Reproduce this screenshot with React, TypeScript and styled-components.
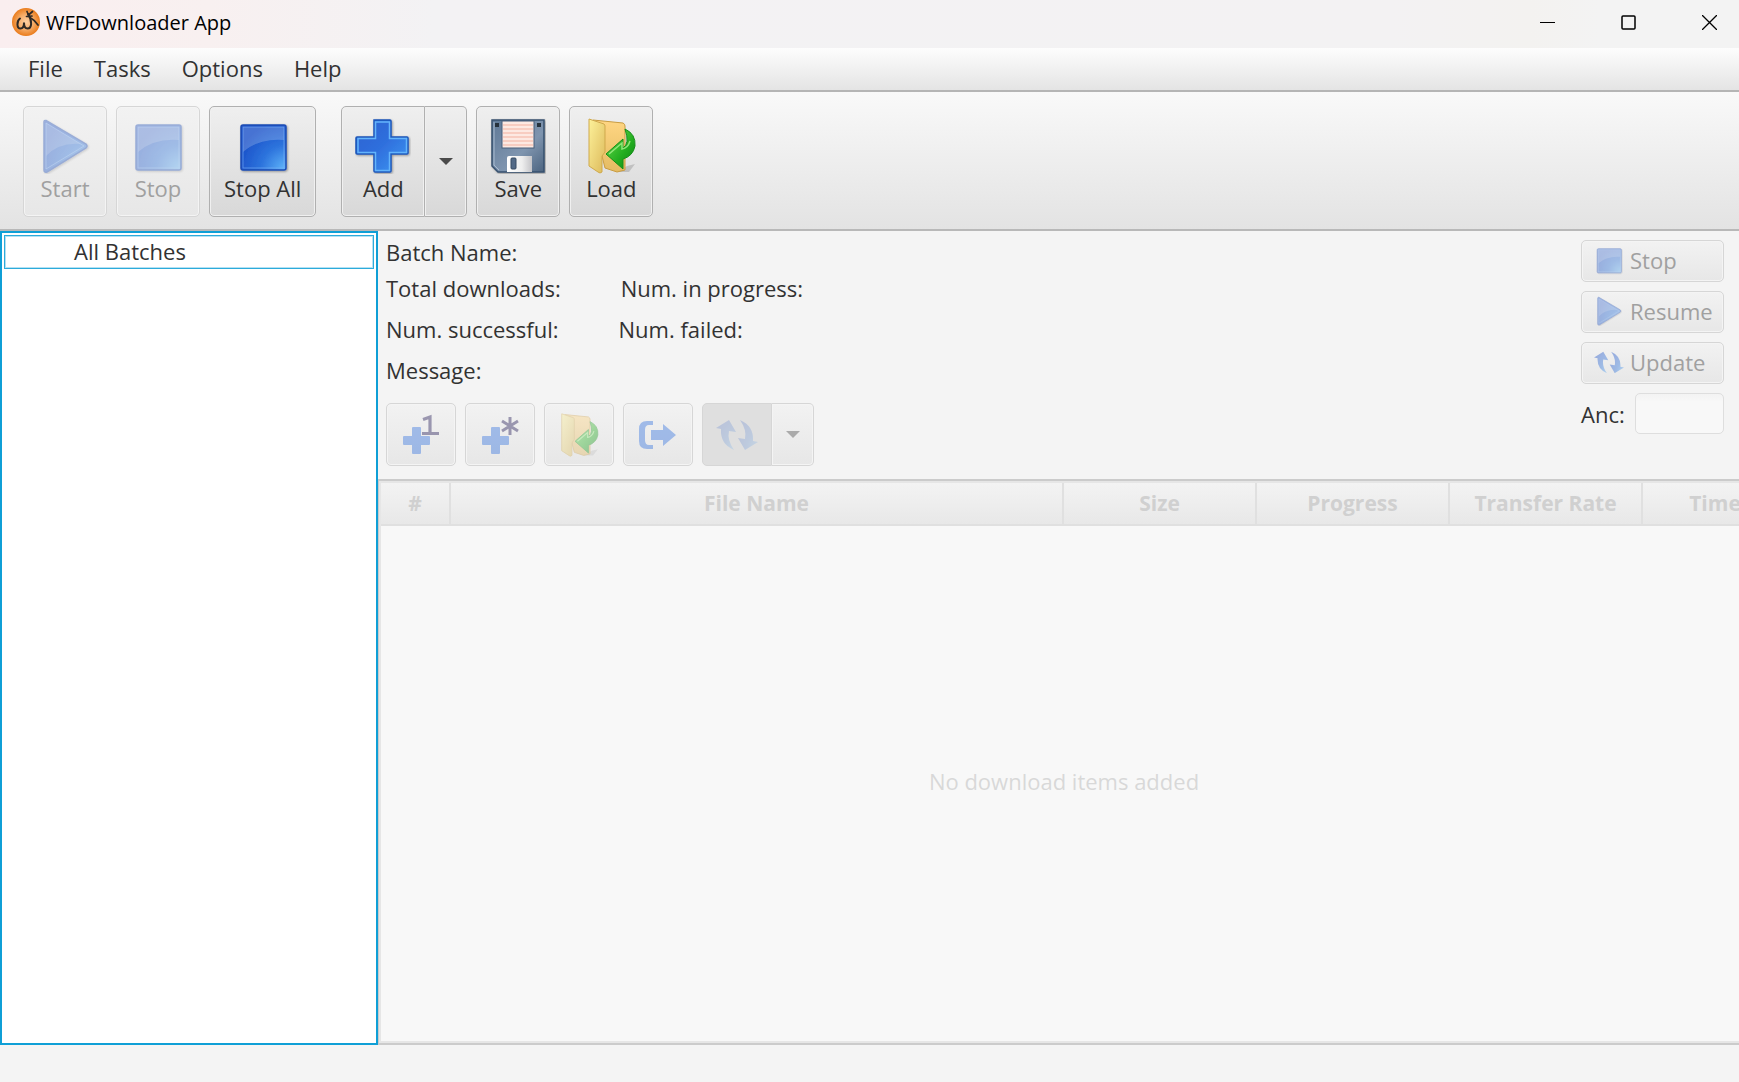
import React from "react";
import styled, { createGlobalStyle, css } from "styled-components";

const Global = createGlobalStyle`
  * { box-sizing: border-box; }
  html, body, #root { height: 100%; margin: 0; }
  body { font-family: "Open Sans", "Noto Sans", sans-serif; font-size: 22px; line-height: 30px; color: #323232; background: #f4f4f4; overflow: hidden; }
  button, input { font: inherit; color: inherit; }
`;

const Window = styled.div`
  display: flex;
  flex-direction: column;
  height: 100vh;
  background: #f4f4f4;
`;

const TitleBar = styled.header`
  display: flex;
  align-items: center;
  height: 48px;
  padding: 0 0 4px 12px;
  background: linear-gradient(90deg, #faeeef 0%, #f8f0f0 12%, #f3f2f4 25%, #f3f2f3 80%, #f3f2f0 88%, #f3f3f3 92%);
`;

const Title = styled.h1`
  margin: 0 auto 0 6px;
  font-size: 20px;
  font-weight: 400;
  line-height: 30px;
  padding-top: 2px;
  color: #000;
`;

const CaptionButtons = styled.div`
  display: flex;
  gap: 21px;
`;

const CaptionButton = styled.button`
  display: grid;
  place-items: center;
  width: 60px;
  height: 44px;
  padding: 0;
  border: 0;
  background: none;
`;

const MenuBar = styled.nav`
  display: flex;
  align-items: center;
  gap: 31px;
  height: 44px;
  padding: 0 28px 2px;
  border-bottom: 2px solid #b5b5b5;
  background: linear-gradient(#fdfdfd, #e4e4e4);
`;

const MenuItem = styled.button`
  padding: 0;
  border: 0;
  background: none;
`;

const ToolBar = styled.div`
  display: flex;
  gap: 9px;
  padding: 14px 23px 12px;
  border-bottom: 2px solid #b8b8b8;
  background: linear-gradient(#f9f9f9, #e3e3e3);
`;

const bevel = css<{ disabled?: boolean }>`
  border: 1px solid ${(p) => (p.disabled ? "#d6d6d6" : "#b0b0b0")};
  border-radius: 5px;
  background: ${(p) => (p.disabled ? "linear-gradient(#f2f2f2, #e7e7e7)" : "linear-gradient(#efefef, #d8d8d8)")};
  box-shadow: inset 0 0 0 1px ${(p) => (p.disabled ? "#f4f4f4" : "#f0f0f0")};
  color: ${(p) => (p.disabled ? "#a0a0a0" : "#323232")};
  svg { opacity: ${(p) => (p.disabled ? 0.4 : 1)}; }
`;

const ToolButton = styled.button<{ $spaced?: boolean }>`
  ${bevel}
  display: flex;
  flex-direction: column;
  align-items: center;
  min-width: 84px;
  height: 111px;
  margin-right: ${(p) => (p.$spaced ? "16px" : "0")};
  padding: 11px ${(p) => (p.$spaced ? "14px" : "12px")};
  line-height: 28px;
`;

const Split = styled.div`
  display: flex;
  & > button:first-child { border-radius: 5px 0 0 5px; }
  & > button:last-child { border-left: 0; border-radius: 0 5px 5px 0; }
`;

const ArrowButton = styled.button<{ $height: number }>`
  ${bevel}
  display: grid;
  place-items: center;
  width: 42px;
  height: ${(p) => p.$height}px;
  padding: 0;
`;

const Body = styled.div`
  display: flex;
  flex: 1;
  min-height: 0;
  margin-bottom: 37px;
`;

const BatchList = styled.ul`
  flex: none;
  width: 378px;
  margin: 0;
  padding: 2px;
  list-style: none;
  border: 2px solid #0f9fd6;
  background: #fff;
`;

const BatchItem = styled.li`
  padding: 0 0 2px 69px;
  border: 1px solid #2cabdb;
  box-shadow: inset 0 0 0 1px #b5e1f2;
`;

const Main = styled.main`
  display: flex;
  flex: 1;
  flex-direction: column;
  min-width: 0;
  overflow: hidden;
`;

const Details = styled.section`
  display: flex;
  justify-content: space-between;
  padding: 5px 15px 13px 8px;
`;

const Info = styled.dl`
  display: flex;
  flex-direction: column;
  margin: 0 0 13px;
`;

const InfoRow = styled.div<{ $height: number }>`
  display: flex;
  align-items: center;
  gap: 60px;
  height: ${(p) => p.$height}px;
`;

const Label = styled.dt``;

const Actions = styled.div`
  display: flex;
  gap: 9px;
`;

const ActionButton = styled.button<{ $pressed?: boolean }>`
  ${bevel}
  display: grid;
  place-items: center;
  width: 70px;
  height: 63px;
  padding: 0;
  ${(p) => p.$pressed && css`
    background: #dfdfdf;
    box-shadow: none;
    svg { opacity: 0.18; }
  `}
`;

const SidePanel = styled.div`
  display: flex;
  flex: none;
  flex-direction: column;
  gap: 9px;
  width: 143px;
  padding-top: 4px;
`;

const SideButton = styled.button`
  ${bevel}
  display: flex;
  align-items: center;
  gap: 6px;
  height: 42px;
  padding: 0 4px 2px 12px;
  svg { flex: none; }
`;

const Field = styled.label`
  display: flex;
  align-items: center;
  justify-content: space-between;
`;

const FieldInput = styled.input`
  width: 89px;
  height: 41px;
  border: 1px solid #dedede;
  border-radius: 5px;
  background: linear-gradient(#f3f3f3, #f8f8f8 8px);
`;

const TableBox = styled.div`
  display: flex;
  flex: 1;
  flex-direction: column;
  overflow: hidden;
  margin-right: -8px;
  border: solid #cbcbcb;
  border-width: 2px 0 2px 1px;
  box-shadow: inset 0 0 0 2px #e6e6e6;
  padding: 2px 0 2px 2px;
  background: #f8f8f8;
`;

const Table = styled.table`
  flex: none;
  width: 1454px;
  table-layout: fixed;
  border-collapse: collapse;
`;

const Th = styled.th<{ $width: number }>`
  width: ${(p) => p.$width}px;
  height: 42px;
  padding: 0 0 2px;
  border-right: 2px solid #e0e0e0;
  border-bottom: 2px solid #e0e0e0;
  background: linear-gradient(#f3f3f3, #e8e8e8);
  font-size: 21px;
  font-weight: 700;
  color: #d0d0d0;
`;

const Empty = styled.p`
  display: grid;
  flex: 1;
  place-items: center;
  margin: 0;
  padding-bottom: 5px;
  color: #d8d8d8;
`;

const HiddenDefs = styled.svg`
  position: absolute;
`;

const Gradients = () => (
  <HiddenDefs width="0" height="0" aria-hidden="true">
    <defs>
      <radialGradient id="blue" cx="1" cy="1" r="1.1">
        <stop offset="0" stopColor="#62b8fb" />
        <stop offset=".5" stopColor="#2d74dd" />
        <stop offset="1" stopColor="#1a50c8" />
      </radialGradient>
      <linearGradient id="plus" x1="0" y1="0" x2="1" y2="1">
        <stop offset="0" stopColor="#2f62d0" />
        <stop offset=".5" stopColor="#2f6fdd" />
        <stop offset="1" stopColor="#3f9af4" />
      </linearGradient>
      <radialGradient id="orange">
        <stop offset="0" stopColor="#fbd0a4" />
        <stop offset=".55" stopColor="#f5ab66" />
        <stop offset="1" stopColor="#ea7c1c" />
      </radialGradient>
      <linearGradient id="disk" x1="0" y1="0" x2="1" y2="1">
        <stop offset="0" stopColor="#5e7896" />
        <stop offset=".6" stopColor="#7f95af" />
        <stop offset="1" stopColor="#4c6480" />
      </linearGradient>
      <linearGradient id="shutter" x1="0" y1="0" x2="1" y2="0">
        <stop offset="0" stopColor="#fff" />
        <stop offset=".6" stopColor="#eee" />
        <stop offset="1" stopColor="#c4c4c8" />
      </linearGradient>
      <linearGradient id="folder" x1="0" y1="0" x2="1" y2="1">
        <stop offset="0" stopColor="#fdf19a" />
        <stop offset="1" stopColor="#dcb95a" />
      </linearGradient>
      <linearGradient id="folderBack" x1="0" y1="0" x2="0" y2="1">
        <stop offset="0" stopColor="#ffd683" />
        <stop offset="1" stopColor="#e4bb62" />
      </linearGradient>
      <linearGradient id="green" x1="0" y1="0" x2="1" y2="1">
        <stop offset="0" stopColor="#6be04e" />
        <stop offset=".6" stopColor="#23ad20" />
        <stop offset="1" stopColor="#0a8310" />
      </linearGradient>
      <filter id="soft" x="-20%" y="-20%" width="150%" height="150%">
        <feDropShadow dx="1" dy="1" stdDeviation="1" floodColor="#000" floodOpacity=".35" />
      </filter>
    </defs>
  </HiddenDefs>
);

const AppLogo = () => (
  <svg width="28" height="28" viewBox="0 0 28 28" aria-hidden="true">
    <circle cx="14" cy="14" r="14" fill="url(#orange)" />
    <path d="M8 10.500C4.500 13 4.500 20.500 8.500 20.500C11 20.500 12 18 12 14.500C12 18 13 20.500 15.500 20.500C20 20.500 20.500 13 16 6" fill="none" stroke="#2e2925" strokeWidth="2" strokeLinecap="round" />
    <path d="M15 3.500L16.500 7L20.500 3.500M14.500 8.500L20 8M18 9.500C21 11 23.500 13.500 26 17" fill="none" stroke="#2e2925" strokeWidth="1.700" strokeLinecap="round" />
  </svg>
);

const PlayIcon = ({ size = 56 }: { size?: number }) => (
  <svg width={size} height={size} viewBox="0 0 56 56" aria-hidden="true">
    <g filter="url(#soft)">
      <path d="M7 4Q7 2 9 2.500L49 26Q51 28 49 30L10 54Q7 55 7 52Z" fill="url(#blue)" stroke="#1c4cb4" strokeWidth="1.500" />
      <path d="M9 5L44 26Q22 24 9 38Z" fill="#fff" fillOpacity=".18" />
      <path d="M9 5V51L47 28Z" fill="none" stroke="#7db1f5" strokeOpacity=".6" />
    </g>
  </svg>
);

const StopIcon = ({ size = 56 }: { size?: number }) => (
  <svg width={size} height={size} viewBox="0 0 56 56" aria-hidden="true">
    <g filter="url(#soft)">
      <rect x="6" y="7" width="45" height="45" rx="2" fill="url(#blue)" stroke="#1c4cb4" strokeWidth="1.500" />
      <path d="M8 9H49V22Q24 20 8 34Z" fill="#fff" fillOpacity=".2" />
      <rect x="8" y="9" width="41" height="41" fill="none" stroke="#7db1f5" strokeOpacity=".6" />
    </g>
  </svg>
);

const PlusIcon = () => (
  <svg width="56" height="56" viewBox="0 0 56 56" aria-hidden="true">
    <g filter="url(#soft)">
      <path d="M19 2H35Q36 2 36 3V19H52Q53 19 53 20V35Q53 36 52 36H36V53Q36 54 35 54H20Q19 54 19 53V36H2Q1 36 1 35V20Q1 19 2 19H19Z" fill="url(#plus)" stroke="#1b56b8" strokeWidth="1.500" />
      <path d="M20.500 4H34.500V20.500H51.500V34.500H34.500V52.500H20.500V34.500H3V20.500H20.500Z" fill="none" stroke="#63b4fb" strokeWidth="1.500" />
    </g>
  </svg>
);

const SaveIcon = () => (
  <svg width="56" height="56" viewBox="0 0 56 56" aria-hidden="true">
    <g filter="url(#soft)">
      <path d="M2 2H54V54H8L2 48Z" fill="url(#disk)" stroke="#36506e" strokeWidth="1.500" />
      <path d="M4 4V47L9 52" fill="none" stroke="#a9bbcf" />
      <rect x="12" y="3" width="32" height="27" fill="#fde9e2" stroke="#495f7a" />
      <path d="M13 7H43M13 11H43M13 15H43M13 19H43M13 23H43M13 27H43" stroke="#f6c4b6" strokeWidth="1.500" />
      <path d="M5 5H9V9H5ZM47 5H51V9H47Z" fill="#25303e" />
      <path d="M17 54V40Q17 38 19 38H42V54Z" fill="url(#shutter)" />
      <rect x="21" y="40" width="5" height="11" rx="1" fill="#526a87" stroke="#364a62" />
    </g>
  </svg>
);

const LoadIcon = ({ size = 56 }: { size?: number }) => (
  <svg width={size} height={size} viewBox="0 0 56 56" aria-hidden="true">
    <path d="M34 54L44 48L52 46L46 54Z" fill="#000" fillOpacity=".15" />
    <path d="M10 2L40 5Q42 6 42 8V52L34 54L22 50Z" fill="url(#folderBack)" stroke="#c99c41" />
    <path d="M6 1L21 6Q22 7 22 8V34L19 38V54Q17 56 15 54L6 48Z" fill="url(#folder)" stroke="#cfa94c" />
    <path d="M42 11Q53 16 52 28Q50 38 40 41V51L23 36L40 21V30Q47 26 42 11Z" fill="url(#green)" stroke="#148e18" />
    <path d="M26 36L39 25V31Q45 30 47 23" fill="none" stroke="#a9f28f" strokeOpacity=".8" strokeWidth="1.500" />
  </svg>
);

const SMALL_PLUS = "M12 13H19Q20 13 20 14V22H28Q29 22 29 23V30Q29 31 28 31H20V39Q20 40 19 40H12Q11 40 11 39V31H3Q2 31 2 30V23Q2 22 3 22H11V14Q11 13 12 13Z";

const AddOneIcon = () => (
  <svg width="40" height="42" viewBox="0 0 40 42" aria-hidden="true">
    <path d={SMALL_PLUS} fill="#2d6fe0" />
    <path d="M22 5.500L29 3V19M21 19.500H38" fill="none" stroke="#1d1452" strokeWidth="3.200" />
  </svg>
);

const AddManyIcon = () => (
  <svg width="40" height="42" viewBox="0 0 40 42" aria-hidden="true">
    <path d={SMALL_PLUS} fill="#2d6fe0" />
    <path d="M30 3V21M22 7L38 17M38 7L22 17" fill="none" stroke="#1d1452" strokeWidth="3" />
  </svg>
);

const ExportIcon = () => (
  <svg width="38" height="30" viewBox="0 0 38 30" aria-hidden="true">
    <path d="M14 1H8Q0 1 0 9V21Q0 29 8 29H14V25H10Q6 25 6 20V10Q6 5 10 5H14Z" fill="#2d6fe0" />
    <path d="M12 10H24V4L37 15L24 26V20H12Z" fill="#2d6fe0" />
  </svg>
);

const RefreshIcon = ({ width = 42 }: { width?: number }) => (
  <svg width={width} viewBox="0 0 42 32" aria-hidden="true">
    <path d="M13 1L0 9L5 10Q4 25 18 31Q11 21 13 12L20 13Z" fill="url(#blue)" />
    <path d="M29 31L42 23L37 22Q38 7 24 1Q31 11 29 20L22 19Z" fill="url(#blue)" />
  </svg>
);

const Caret = () => (
  <svg width="14" height="7" viewBox="0 0 14 7" aria-hidden="true">
    <path d="M0 0H14L7 7Z" fill="#4a4a4a" />
  </svg>
);

const columns: [string, number][] = [
  ["#", 69],
  ["File Name", 613],
  ["Size", 193],
  ["Progress", 193],
  ["Transfer Rate", 193],
  ["Time Left", 193],
];

export default function App() {
  return (
    <Window>
      <Global />
      <Gradients />
      <TitleBar>
        <AppLogo />
        <Title>WFDownloader App</Title>
        <CaptionButtons>
          <CaptionButton aria-label="Minimize">
            <svg width="15" height="15"><path d="M0 7.500H15" stroke="#000" /></svg>
          </CaptionButton>
          <CaptionButton aria-label="Maximize">
            <svg width="15" height="15"><rect x="1" y="1" width="13" height="13" rx="1" fill="none" stroke="#000" strokeWidth="1.500" /></svg>
          </CaptionButton>
          <CaptionButton aria-label="Close">
            <svg width="15" height="15"><path d="M0 0L15 15M15 0L0 15" stroke="#000" strokeWidth="1.300" /></svg>
          </CaptionButton>
        </CaptionButtons>
      </TitleBar>
      <MenuBar>
        {["File", "Tasks", "Options", "Help"].map((name) => (
          <MenuItem key={name}>{name}</MenuItem>
        ))}
      </MenuBar>
      <ToolBar>
        <ToolButton disabled><PlayIcon />Start</ToolButton>
        <ToolButton disabled><StopIcon />Stop</ToolButton>
        <ToolButton $spaced><StopIcon />Stop All</ToolButton>
        <Split>
          <ToolButton><PlusIcon />Add</ToolButton>
          <ArrowButton $height={111} aria-label="More add options"><Caret /></ArrowButton>
        </Split>
        <ToolButton><SaveIcon />Save</ToolButton>
        <ToolButton><LoadIcon />Load</ToolButton>
      </ToolBar>
      <Body>
        <BatchList>
          <BatchItem>All Batches</BatchItem>
        </BatchList>
        <Main>
          <Details>
            <div>
              <Info>
                <InfoRow $height={31}><Label>Batch Name:</Label></InfoRow>
                <InfoRow $height={41}><Label>Total downloads:</Label><Label>Num. in progress:</Label></InfoRow>
                <InfoRow $height={41}><Label>Num. successful:</Label><Label>Num. failed:</Label></InfoRow>
                <InfoRow $height={41}><Label>Message:</Label></InfoRow>
              </Info>
              <Actions>
                <ActionButton disabled aria-label="Add one"><AddOneIcon /></ActionButton>
                <ActionButton disabled aria-label="Add many"><AddManyIcon /></ActionButton>
                <ActionButton disabled aria-label="Load"><LoadIcon size={44} /></ActionButton>
                <ActionButton disabled aria-label="Export"><ExportIcon /></ActionButton>
                <Split>
                  <ActionButton disabled $pressed aria-label="Refresh"><RefreshIcon /></ActionButton>
                  <ArrowButton disabled $height={63} aria-label="More refresh options"><Caret /></ArrowButton>
                </Split>
              </Actions>
            </div>
            <SidePanel>
              <SideButton disabled><StopIcon size={30} />Stop</SideButton>
              <SideButton disabled><PlayIcon size={30} />Resume</SideButton>
              <SideButton disabled><RefreshIcon width={30} />Update</SideButton>
              <Field>Anc:<FieldInput disabled /></Field>
            </SidePanel>
          </Details>
          <TableBox>
            <Table>
              <thead>
                <tr>
                  {columns.map(([name, width]) => (
                    <Th key={name} $width={width} scope="col">{name}</Th>
                  ))}
                </tr>
              </thead>
            </Table>
            <Empty>No download items added</Empty>
          </TableBox>
        </Main>
      </Body>
    </Window>
  );
}
